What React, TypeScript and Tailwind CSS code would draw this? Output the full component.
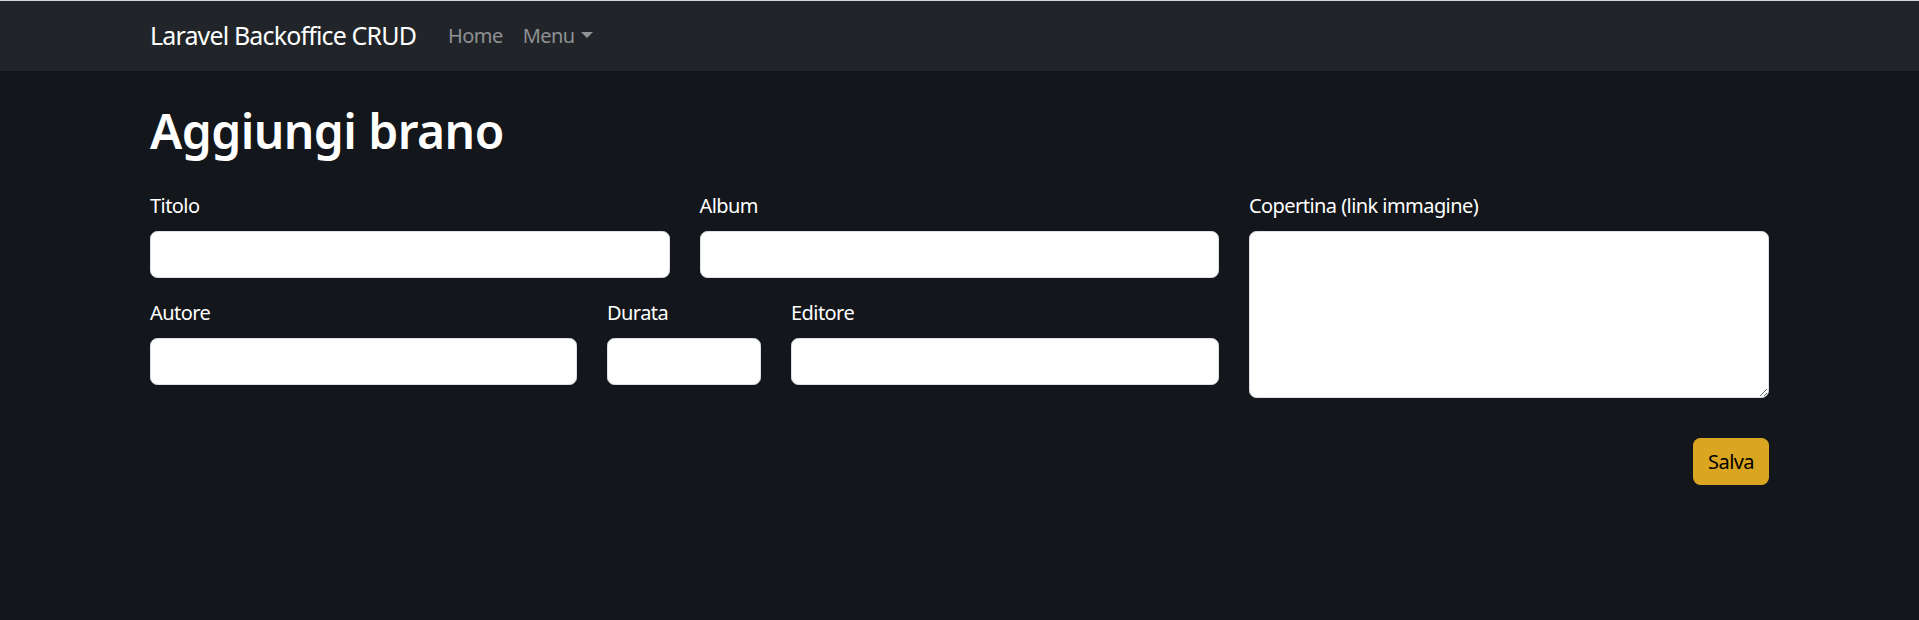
import React from 'react'

// Campi del form, disposti come nella pagina originale
const ROW_ONE = [
  { id: 'title', label: 'Titolo' },
  { id: 'album', label: 'Album' },
]

const ROW_TWO = [
  { id: 'author', label: 'Autore' },
  { id: 'duration', label: 'Durata' },
  { id: 'editor', label: 'Editore' },
]

const labelClass = 'block text-[20px] leading-[30px] mb-[10px] text-white'
const inputClass =
  'block w-full h-[47px] rounded-[7.5px] border border-[#dee2e6] bg-white px-[15px] text-[20px] text-[#212529] outline-none'

function Field({ id, label }: { id: string; label: string }) {
  return (
    <div className="mb-[20px]">
      <label htmlFor={id} className={labelClass}>
        {label}
      </label>
      <input id={id} type="text" className={inputClass} />
    </div>
  )
}

export default function App() {
  return (
    <div
      className="min-h-screen bg-[#13161a] text-white tracking-[-0.035em]"
      style={{ fontFamily: '"Noto Sans", "Open Sans", sans-serif' }}
    >
      {/* Navbar */}
      <nav className="border-t border-[#d4d6d8] bg-[#212529] h-[71px]">
        <div className="w-[1619px] mx-auto h-full flex items-center">
          <a href="#" className="text-[25px] leading-[37.5px] tracking-[-0.034em] text-white mr-[22px]">
            Laravel Backoffice CRUD
          </a>
          <ul className="flex items-center">
            <li>
              <a href="#" className="block px-[10px] text-[20px] leading-[30px] text-[#8f9194]">
                Home
              </a>
            </li>
            <li>
              <a href="#" className="block px-[10px] text-[20px] leading-[30px] text-[#8f9194]">
                Menu
                <span className="inline-block w-0 h-0 ml-[6px] align-[5px] border-t-[6px] border-t-current border-x-[6px] border-x-transparent" />
              </a>
            </li>
          </ul>
        </div>
      </nav>

      <main className="w-[1619px] mx-auto pt-[30px]">
        <h1 className="text-[48px] leading-[60px] font-semibold mb-[30px]">Aggiungi brano</h1>

        <form onSubmit={(e) => e.preventDefault()}>
          <div className="flex gap-x-[30px]">
            <div className="w-[1069px]">
              <div className="grid grid-cols-2 gap-x-[30px]">
                {ROW_ONE.map((f) => (
                  <Field key={f.id} {...f} />
                ))}
              </div>
              <div className="grid grid-cols-[427px_154px_1fr] gap-x-[30px]">
                {ROW_TWO.map((f) => (
                  <Field key={f.id} {...f} />
                ))}
              </div>
            </div>

            <div className="flex-1 mb-[20px]">
              <label htmlFor="cover" className={labelClass}>
                Copertina (link immagine)
              </label>
              <textarea
                id="cover"
                className="block w-full h-[167px] rounded-[7.5px] border border-[#dee2e6] bg-white px-[15px] py-[7px] text-[20px] text-[#212529] outline-none"
              />
            </div>
          </div>

          <div className="flex justify-end mt-[20px]">
            <button
              type="submit"
              className="h-[47px] px-[15px] rounded-[7.5px] bg-[#daa520] text-[20px] leading-[30px] text-black"
            >
              Salva
            </button>
          </div>
        </form>
      </main>
    </div>
  )
}
